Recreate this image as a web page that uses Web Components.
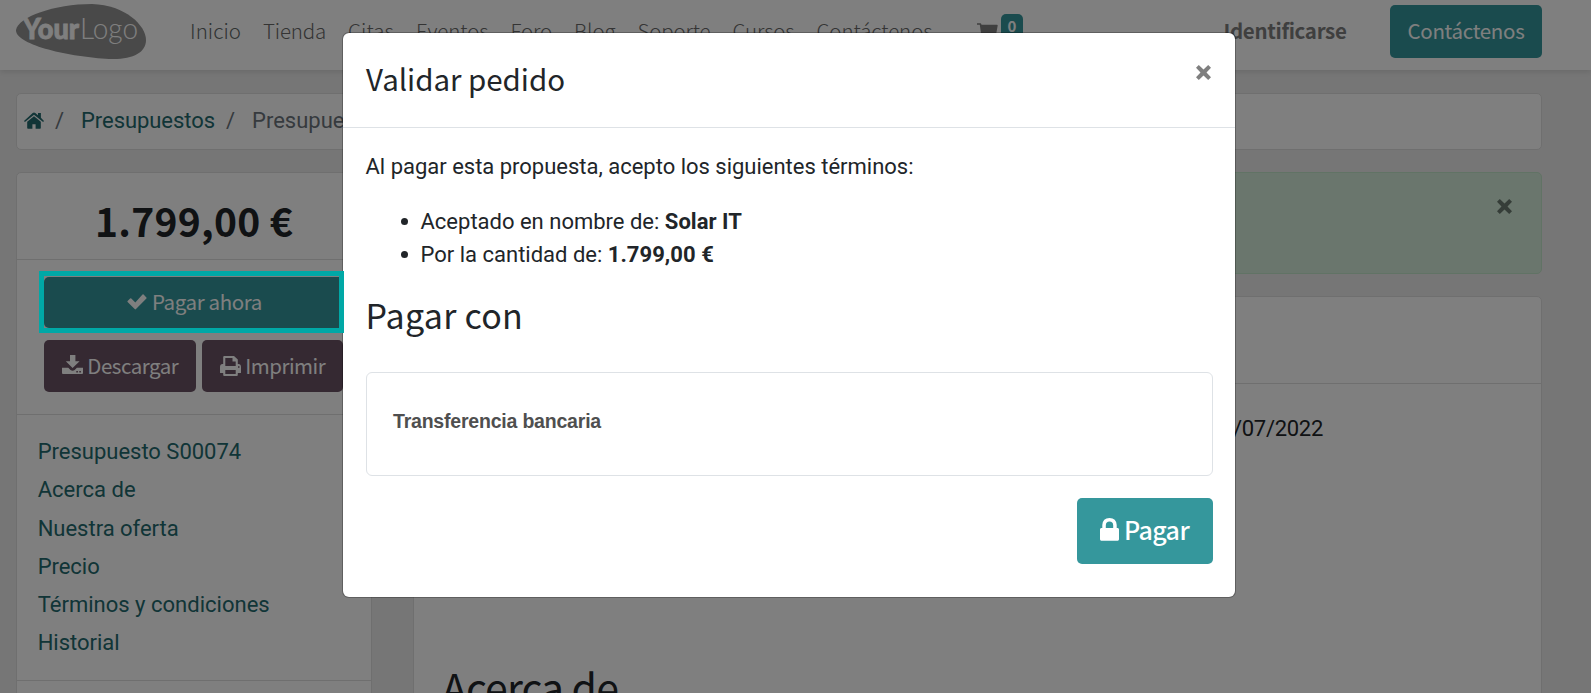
<!DOCTYPE html>
<html lang="es"><head><meta charset="utf-8"><title>Validar pedido</title>
<style>
html,body{margin:0;height:693px;overflow:hidden;background:#ececec}
body{position:relative;font:22px/33px Roboto,sans-serif;color:#212529;--head:"Noto Sans CJK SC",sans-serif;--teal:#35979c;--link:#236a6e}
</style></head><body>
<portal-page></portal-page>
<script>
const define=(name,css,html,ready)=>customElements.define(name,class extends HTMLElement{
  constructor(){super();this.attachShadow({mode:'open'}).innerHTML='<style>*{box-sizing:border-box}'+css+'</style>'+html}
  connectedCallback(){if(ready)ready(this)}
});

/* Text run whose letter-spacing is tuned so that it spans a given advance width. */
define('ui-text',':host{display:inline-block;white-space:pre;flex:none}','<slot></slot>',el=>{
  const w=parseFloat(el.getAttribute('w'));
  if(!w)return;
  const n=el.textContent.length;
  el.style.letterSpacing=(w-el.getBoundingClientRect().width)/n+'px';
});

const glyphs={
 home:['0 0 20 17','<path d="M10 4.200 3.200 9.800V16q0 .8.8.8h4.400v-4.600h3.200v4.600H16q.8 0 .8-.8V9.800z"/><path d="M10 2.700.9 10.100 0 8.900 8.700 1Q10 0 11.300 1L14 3.300V1h2.900v4.800L20 8.900l-.9 1.200z"/>'],
 check:['0 0 20 16','<path d="M16.6.6 19.4 3.4Q19.9 4 19.4 4.6L9 15.1Q8.3 15.7 7.7 15.1L.6 8.1Q.1 7.5.6 6.9L3.1 4.4Q3.7 4 4.3 4.4L8.3 8.5 15.5.6Q16 .1 16.6.6Z"/>'],
 down:['0 0 21 19','<path d="M8 0h5.4v6.2h4.2L10.6 13 3.8 6.2H8z"/><path fill-rule="evenodd" d="M0 12.8h6.3l2.2 2.1q2.1 1.6 4.2 0l2.2-2.1H21V18q0 1-1 1H1q-1 0-1-1zM14.3 16h1.6v1.5h-1.6zm3 0h1.6v1.5h-1.6z"/>'],
 print:['0 0 21 20','<path fill-rule="evenodd" d="M3.200 1Q3.200 0 4.200 0H14l3.800 3.500V8h.6Q21 8.200 21 11v5.500q0 .5-.5.5h-2.700v2q0 1-1 1H4.200q-1 0-1-1v-2H.5q-.5 0-.5-.5V11Q0 8.200 2.600 8h.6zM5.300 2v8h10.400V5.500h-3.200V2zM5.300 14v4h10.400v-4zM18 10.300h1.500v1.500H18z"/>'],
 cart:['0 0 21 19','<path d="M0 .200h3.600q.700 0 .900 1.500H20q.800 0 .700.800l-1.300 7.300q-.100.500-.800.600L6 11.600l.3 1.500h12v1.500H5.200q-.8 0-.700-.800L2.800 1.700H0z"/><circle cx="6.300" cy="17" r="1.600"/><circle cx="17" cy="17" r="1.600"/>'],
 lock:['0 0 19 23','<path fill-rule="evenodd" d="M2.300 10V7Q2.700 0 9.500 0t7.200 7v3h1.100Q19 10.200 19 11.500v9.800q0 1.400-1.200 1.400H1.200Q0 22.700 0 21.300v-9.800Q0 10.200 1.200 10zm3.500 0h7.400V7.200Q13 3.600 9.500 3.600T5.800 7.200z"/>'],
 close:['0 0 15 15','<path d="M2.800 0 7.500 4.500 12.200 0 15 2.800 10.500 7.500 15 12.200 12.200 15 7.500 10.500 2.800 15 0 12.200 4.500 7.500 0 2.800z"/>']
};
define('ui-icon',':host{display:block;flex:none}svg{display:block;width:100%;height:100%;fill:currentColor}','<svg preserveAspectRatio="none"></svg>',el=>{
  const g=glyphs[el.getAttribute('name')],s=el.shadowRoot.querySelector('svg');
  s.setAttribute('viewBox',g[0]);s.innerHTML=g[1];
});

define('brand-logo',':host{display:block;width:130px;height:56px;flex:none}svg{display:block}text{fill:#fff}',
`<svg width="130" height="56" viewBox="0 0 130 56"><path fill="#929292" d="M0 26C2 13 38 0 76 0c34 1 54 22 54 36 0 13-14 20-37 19C54 53-1 41 0 26z"/>
<text x="7" y="35" font-family="Lato" font-weight="900" font-size="28" stroke="#fff" stroke-width=".8" textLength="56" lengthAdjust="spacingAndGlyphs">Your</text><text x="64" y="35" font-family="Lato" font-weight="300" font-size="29" textLength="58" lengthAdjust="spacingAndGlyphs">Logo</text></svg>`);

define('ui-button',`:host{display:flex;align-items:center;justify-content:center;flex:none;color:#fff;background:var(--teal);border-radius:5px;font-family:var(--head)}
:host([tone=plum]){background:#6b5264}`,'<slot></slot>');

define('site-nav',`:host{display:flex;height:70px;padding:0 49px 0 16px;background:#fff;box-shadow:0 2px 5px rgba(0,0,0,.1);position:relative;font:300 20.500px/60px var(--head);color:#686868}
brand-logo{margin:4px 44px 0 0}
nav{display:flex;width:787px;height:62px;flex:none}nav ui-text{margin-right:22px}.on{color:#606868}
ui-icon{width:21px;height:19px;margin-top:23px;color:#7f7f7f}
.badge{width:22px;height:27px;margin:14px 0 0 3px;border-radius:5px 5px 4px 4px;background:var(--teal);color:#fff;font:700 15px/24px var(--head);text-align:center}
.login{margin:0 43.500px 0 auto;font-weight:700;color:#7f7f7f}ui-button{width:152px;height:53px;margin-top:5px;line-height:51px;font-weight:400}ui-button ui-text{margin:-2px 0 0 0}`,
`<brand-logo></brand-logo><nav><ui-text w="51" class="on">Inicio</ui-text><ui-text w="63">Tienda</ui-text><ui-text w="46">Citas</ui-text><ui-text w="72.500">Eventos</ui-text><ui-text w="41.500">Foro</ui-text><ui-text w="41.500">Blog</ui-text><ui-text w="73">Soporte</ui-text><ui-text w="62">Cursos</ui-text><ui-text w="116">Contáctenos</ui-text></nav>
<ui-icon name="cart"></ui-icon><span class="badge">0</span><ui-text class="login" w="123">Identificarse</ui-text><ui-button><ui-text w="117">Contáctenos</ui-text></ui-button>`);

define('bread-crumbs',`:host{display:flex;align-items:center;height:57px;border:1px solid #dedede;border-radius:5px;background:#fff;padding:0 7px;color:#6c757d}
ui-icon{width:20px;height:17px;color:var(--link);margin:-2px 11px 0 0}.a{color:var(--link);margin:-2px 11px 0 17px}.b{margin:-2px 0 0 17px}.s{margin-top:-2px}`,
`<ui-icon name="home"></ui-icon><ui-text class="s" w="9">/</ui-text><ui-text class="a" w="134">Presupuestos</ui-text><ui-text class="s" w="9">/</ui-text><ui-text class="b">Presupuesto S00074</ui-text>`);

define('quote-sidebar',`:host{display:block;width:356px;height:560px;border:1px solid #dedede;border-radius:5px;background:#fff;flex:none}
.price{height:87px;border-bottom:1px solid #dedede;display:flex;padding-left:78px;font:700 39px/94px var(--head);color:#212529}
.actions{height:155px;border-bottom:1px solid #dedede;padding:17px 0 0 27px;font:400 20.500px/50px var(--head)}
.row{display:flex;gap:6px;margin-top:12px}.pay{width:300px;height:51px}.dl{width:152px;height:52px}.pr{width:141px;height:52px}
.pay ui-icon{width:20px;height:16px;margin:-2px 5px 0 1px}.dl ui-icon{width:21px;height:19px;margin:-3px 4.500px 0 0}.pr ui-icon{width:21px;height:20px;margin:0 4.500px 0 0}
.pay ui-text{margin-top:-4px}.pr ui-text,.dl ui-text{margin-top:-2px}
.links{display:flex;flex-direction:column;align-items:flex-start;height:266px;padding:18px 0 0 20.700px;border-bottom:1px solid #dedede;line-height:38.300px;color:var(--link)}`,
`<div class="price"><ui-text w="198">1.799,00 €</ui-text></div>
<div class="actions"><ui-button class="pay"><ui-icon name="check"></ui-icon><ui-text w="110">Pagar ahora</ui-text></ui-button>
<div class="row"><ui-button class="dl" tone="plum"><ui-icon name="down"></ui-icon><ui-text w="91">Descargar</ui-text></ui-button><ui-button class="pr" tone="plum"><ui-icon name="print"></ui-icon><ui-text w="80">Imprimir</ui-text></ui-button></div></div>
<div class="links"><ui-text w="203.500">Presupuesto S00074</ui-text><ui-text w="98">Acerca de</ui-text><ui-text w="141">Nuestra oferta</ui-text><ui-text w="62">Precio</ui-text><ui-text w="232">Términos y condiciones</ui-text><ui-text w="82">Historial</ui-text></div>`);

define('quote-main',`:host{display:block;width:1129px;flex:none}
.alert{height:102px;border:1px solid #c3e6cb;background:#d4edda;border-radius:5px;display:flex;justify-content:flex-end;padding:26px 29px}
.alert ui-icon{width:15px;height:15px;color:#6b7a70}
.card{height:420px;margin-top:22px;border:1px solid #dedede;border-radius:5px;background:#fff}
.top{height:87px;border-bottom:1px solid #dedede}
.date{display:flex;justify-content:flex-end;padding:28px 218px 0 0}.h{margin:212px 0 0 28px;font:400 41px/58px var(--head)}`,
`<div class="alert"><ui-icon name="close"></ui-icon></div><div class="card"><div class="top"></div><div class="date"><ui-text w="90">/07/2022</ui-text></div><div class="h"><ui-text w="176">Acerca de</ui-text></div></div>`);

define('pay-modal',`:host{display:block;position:absolute;left:342px;top:32px;width:894px;height:566px;background:#fff;background-clip:padding-box;border:1px solid rgba(0,0,0,.25);border-radius:7px}
header{display:flex;justify-content:space-between;height:95px;border-bottom:1px solid #dee2e6;padding:0 24px 0 23px;font:400 29.500px/90px var(--head)}
header ui-icon{width:15px;height:15px;margin-top:32px;color:#7f7f7f}
section{padding:22px 22px 0 22.500px}p,ul,h3{margin:0}ul{padding:22px 0 0 35px;list-style:none}b{font-weight:700}
li{height:33px;display:flex;align-items:center}li::before{content:"";width:7px;height:7px;border-radius:50%;background:#212529;margin:0 13px 0 0}
h3{font:400 34px/50px var(--head);margin-top:19px}
.method{height:104px;border:1px solid #dee2e6;border-radius:6px;margin-top:32px;padding:33px 26.500px;font:700 19.500px/31px "Liberation Sans",sans-serif;color:#4f4f4f}
ui-button{width:136px;height:66px;margin:22px 0 0 auto;font:500 25px/62px var(--head)}ui-button ui-icon{width:19px;height:23px;margin:-4px 5px 0 -1px}ui-button ui-text{margin-top:-4px}`,
`<header><ui-text w="199">Validar pedido</ui-text><ui-icon name="close"></ui-icon></header>
<section><p><ui-text w="548">Al pagar esta propuesta, acepto los siguientes términos:</ui-text></p>
<ul><li><ui-text w="244.300">Aceptado en nombre de: </ui-text><b><ui-text w="77">Solar IT</ui-text></b></li><li><ui-text w="187.300">Por la cantidad de: </ui-text><b><ui-text w="106">1.799,00 €</ui-text></b></li></ul>
<h3><ui-text w="157.500">Pagar con</ui-text></h3><div class="method"><ui-text w="208">Transferencia bancaria</ui-text></div>
<ui-button><ui-icon name="lock"></ui-icon><ui-text w="65">Pagar</ui-text></ui-button></section>`);

define('focus-frame',':host{display:block;position:absolute;left:39px;top:271px;width:305px;height:62px;border:5px solid #00a8a6;box-sizing:border-box}','');

define('portal-page',`:host{display:block;height:693px;overflow:hidden}
main{padding:23px 49px 0 16px}.cols{display:flex;justify-content:space-between;margin-top:22px}
.shade{position:absolute;inset:0;background:rgba(0,0,0,.5)}`,
`<site-nav></site-nav><main><bread-crumbs></bread-crumbs><div class="cols"><quote-sidebar></quote-sidebar><quote-main></quote-main></div></main><div class="shade"></div><pay-modal></pay-modal><focus-frame></focus-frame>`);
</script></body></html>
